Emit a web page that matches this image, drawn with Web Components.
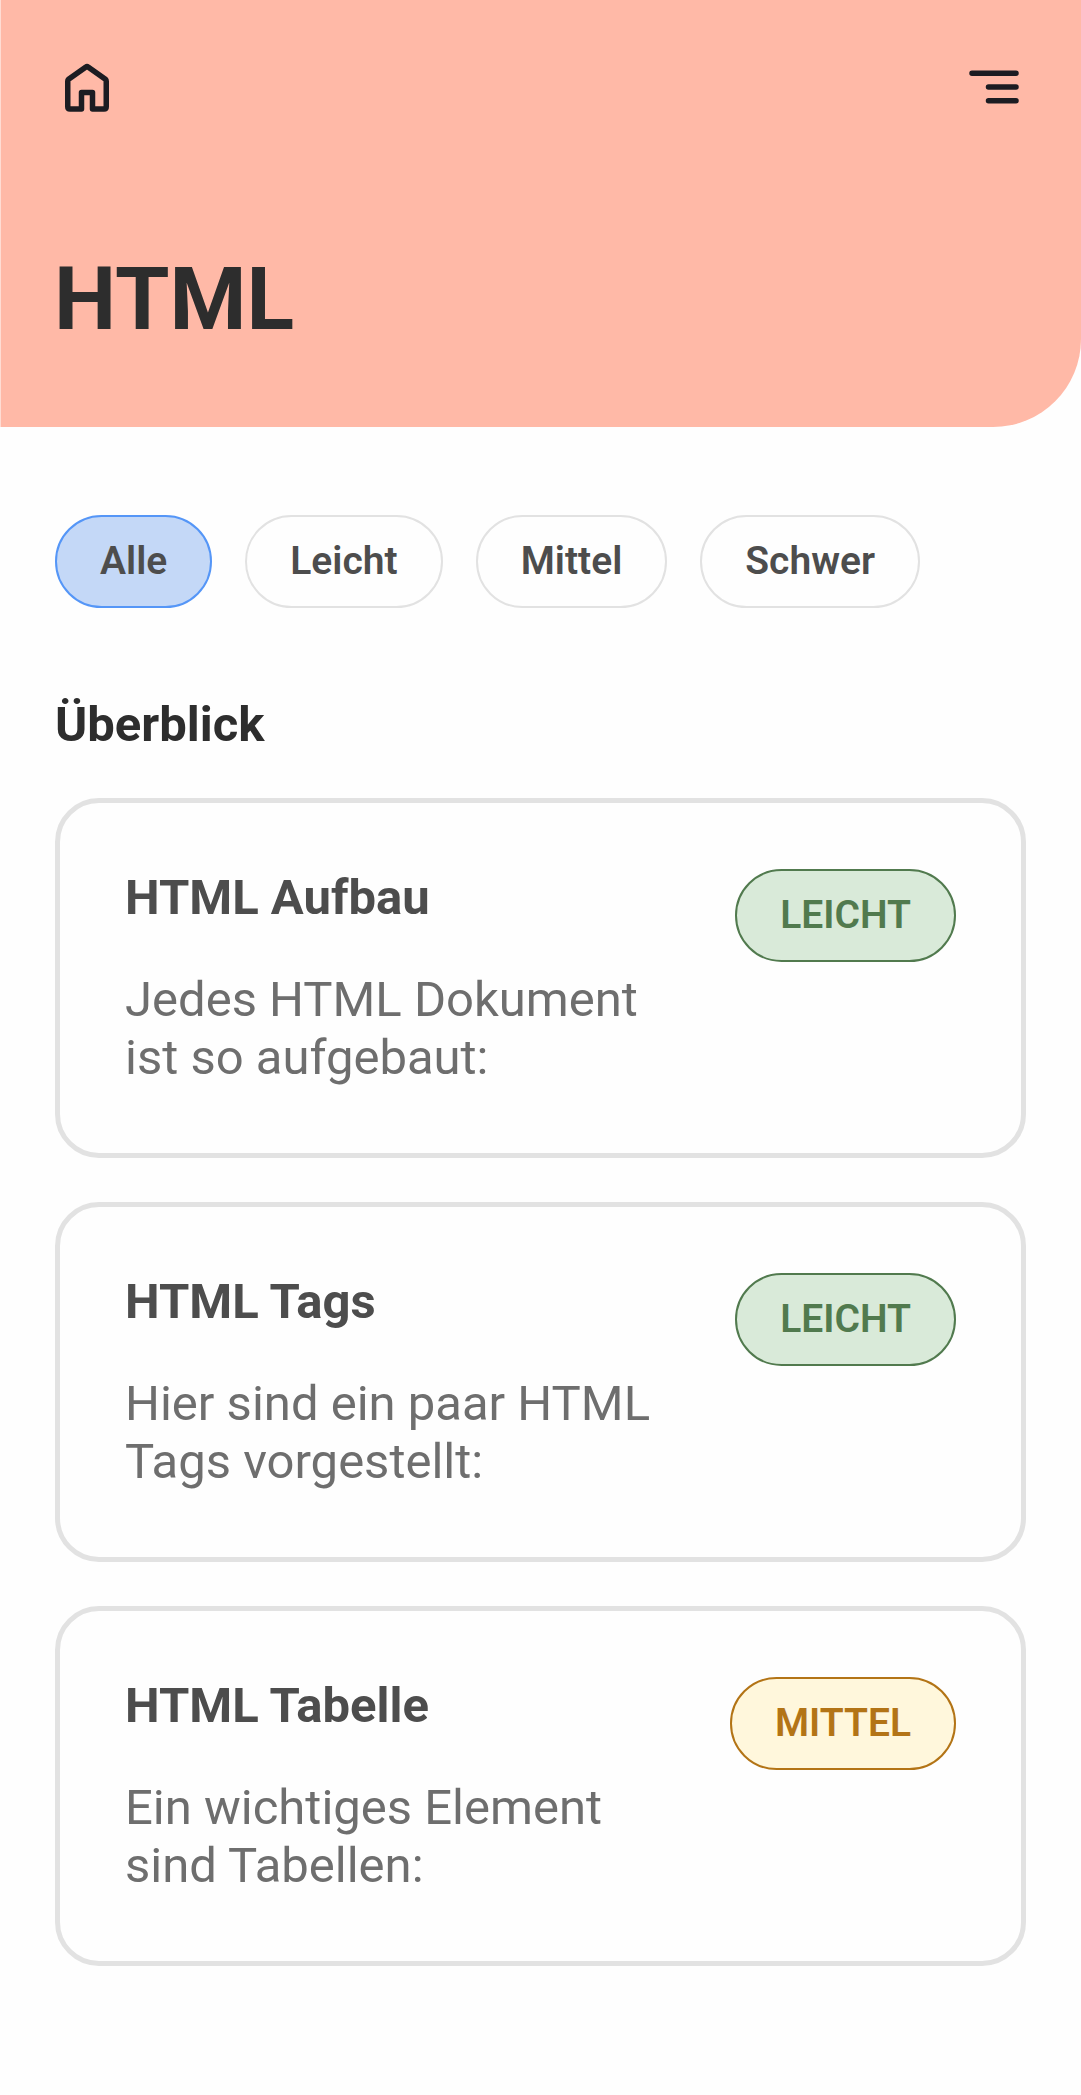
<!DOCTYPE html>
<html lang="de">
<head>
<meta charset="utf-8">
<meta name="viewport" content="width=device-width, initial-scale=1">
<title>HTML</title>
<style>
  body {
    margin: 0;
    background: #fefefe;
    color: #2d2d2d;
    font-family: Roboto, sans-serif;
  }
</style>
</head>
<body>
<topic-page>
  <topic-header slot="header">HTML</topic-header>
  <level-filter slot="filter">
    <filter-chip selected>Alle</filter-chip>
    <filter-chip>Leicht</filter-chip>
    <filter-chip>Mittel</filter-chip>
    <filter-chip>Schwer</filter-chip>
  </level-filter>
  <card-list heading="Überblick">
    <topic-card>
      <span slot="title">HTML Aufbau</span>
      Jedes HTML Dokument ist so aufgebaut:
      <level-badge slot="badge" level="leicht">LEICHT</level-badge>
    </topic-card>
    <topic-card>
      <span slot="title">HTML Tags</span>
      Hier sind ein paar HTML Tags vorgestellt:
      <level-badge slot="badge" level="leicht">LEICHT</level-badge>
    </topic-card>
    <topic-card>
      <span slot="title">HTML Tabelle</span>
      Ein wichtiges Element sind Tabellen:
      <level-badge slot="badge" level="mittel">MITTEL</level-badge>
    </topic-card>
  </card-list>
</topic-page>

<script>
  const define = (name, markup, setup) => {
    customElements.define(name, class extends HTMLElement {
      constructor() {
        super();
        this.attachShadow({ mode: 'open' }).innerHTML = markup;
      }
      connectedCallback() {
        if (setup) setup(this, this.shadowRoot);
      }
    });
  };

  define('topic-page', `
    <style>
      :host { display: block; }
      main { display: flex; flex-direction: column; gap: 88px; padding: 88px 55px; }
    </style>
    <slot name="header"></slot>
    <main>
      <slot name="filter"></slot>
      <slot></slot>
    </main>`);

  define('topic-header', `
    <style>
      :host {
        display: block;
        padding: 54px 54px 76px 53px;
        background: #ffb9a7;
        border-left: 1px solid #ffdcd3;
        border-bottom-right-radius: 88px;
      }
      nav { display: flex; justify-content: space-between; margin-bottom: 127px; }
      a, button { display: block; padding: 0; border: 0; background: none; color: #1c1c22; cursor: pointer; }
      svg { display: block; width: 66px; height: 66px; fill: none; stroke: currentColor; stroke-width: 2; stroke-linecap: round; stroke-linejoin: round; }
      h1 { margin: 0; font-size: 88px; line-height: 104px; font-weight: 700; }
    </style>
    <nav>
      <a href="#" aria-label="Startseite">
        <svg viewBox="0 0 24 24"><path d="M5 9.9Q5 9.5 5.3 9.2L11.6 4.7Q12 4.4 12.4 4.7L18.7 9.2Q19 9.5 19 9.9V19.2Q19 20 18.2 20H14V14H10V20H5.8Q5 20 5 19.2Z"/></svg>
      </a>
      <button type="button" aria-label="Menü">
        <svg viewBox="0 0 24 24"><path d="M4 7H20M10 12H20M10 17H20"/></svg>
      </button>
    </nav>
    <h1><slot></slot></h1>`);

  define('level-filter', `
    <style>
      :host { display: flex; flex-wrap: wrap; gap: 33px; }
    </style>
    <slot></slot>`, (host) => {
      host.addEventListener('click', (event) => {
        const chip = event.target.closest('filter-chip');
        if (!chip) return;
        host.querySelectorAll('filter-chip').forEach((c) => c.toggleAttribute('selected', c === chip));
      });
    });

  define('filter-chip', `
    <style>
      :host { display: block; }
      button {
        display: block;
        padding: 22px 43px;
        border: 2px solid #e2e2e2;
        border-radius: 47px;
        background: none;
        color: #4d4d4d;
        font: 600 39px/45px Roboto, sans-serif;
        cursor: pointer;
      }
      :host([selected]) button { background: #c4d8f7; border-color: #5596f7; }
    </style>
    <button type="button"><slot></slot></button>`);

  define('card-list', `
    <style>
      :host { display: flex; flex-direction: column; gap: 44px; }
      h2 { margin: 0; font-size: 49px; line-height: 58px; font-weight: 700; }
    </style>
    <h2></h2>
    <slot></slot>`, (host, root) => {
      root.querySelector('h2').textContent = host.getAttribute('heading');
    });

  define('topic-card', `
    <style>
      :host { display: block; }
      article {
        display: flex;
        align-items: flex-start;
        gap: 55px;
        padding: 66px 65px;
        border: 5px solid #e2e2e2;
        border-radius: 44px;
      }
      .text { flex: 1; display: flex; flex-direction: column; gap: 44px; font-size: 49px; line-height: 58px; }
      h3, p { margin: 0; }
      h3 { font-size: inherit; font-weight: 700; color: #4d4d4d; }
      p { color: #6e6e6e; }
    </style>
    <article>
      <div class="text">
        <h3><slot name="title"></slot></h3>
        <p><slot></slot></p>
      </div>
      <slot name="badge"></slot>
    </article>`);

  define('level-badge', `
    <style>
      :host {
        display: block;
        padding: 22px 43px;
        border: 2px solid #517a4e;
        border-radius: 47px;
        background: #d9ead9;
        color: #517a4e;
        font: 600 39px/45px Roboto, sans-serif;
      }
      :host([level="mittel"]) { background: #fff7dc; border-color: #b37416; color: #b37416; }
    </style>
    <slot></slot>`);
</script>
</body>
</html>
